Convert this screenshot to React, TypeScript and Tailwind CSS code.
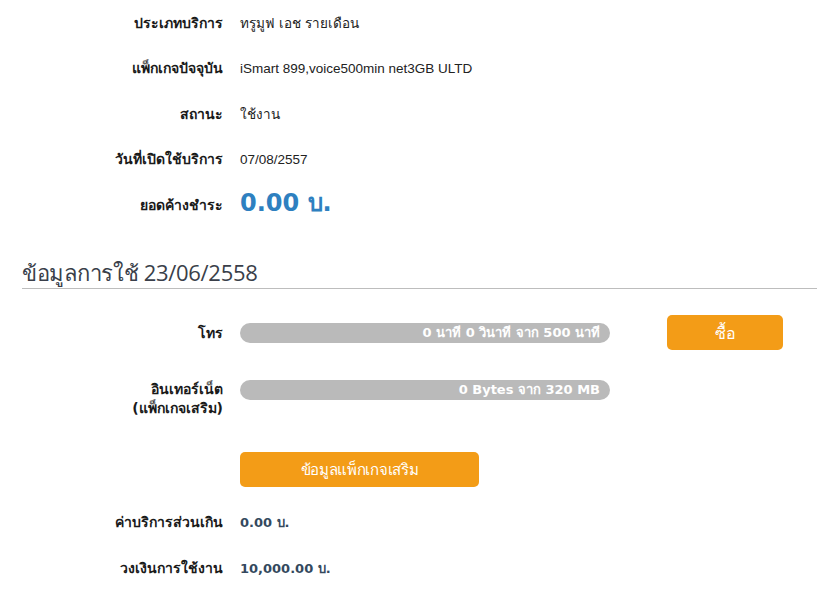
import React from "react";

const labelCls = "text-right font-bold text-[14px] text-[#1a1a1a] leading-[18px]";
const font = { fontFamily: "Tahoma, 'DejaVu Sans', 'Noto Sans', sans-serif" };
const valFont = { fontFamily: "'Liberation Sans', Arial, sans-serif" };
const headFont = { fontFamily: "'Open Sans', 'Noto Sans', sans-serif" };

function Row({ label, children, h = "h-[45.5px]" }: { label: React.ReactNode; children: React.ReactNode; h?: string }) {
  return (
    <div className={`grid grid-cols-[223px_1fr] gap-x-[17px] items-center ${h}`}>
      <div className={labelCls}>{label}</div>
      <div>{children}</div>
    </div>
  );
}

function Bar({ text }: { text: string }) {
  return (
    <div className="w-[370px] h-[20px] rounded-full bg-[#bababa] flex items-center justify-end pr-[10px] text-white font-bold text-[13px]">
      {text}
    </div>
  );
}

export default function App() {
  return (
    <div className="w-[817px] h-[600px] bg-white overflow-hidden" style={font}>
      <div>
        <Row label="ประเภทบริการ"><span className="text-[13.5px] text-[#222]" style={valFont}>ทรูมูฟ เอช รายเดือน</span></Row>
        <Row label="แพ็กเกจปัจจุบัน"><span className="text-[13.5px] text-[#222]" style={valFont}>iSmart 899,voice500min net3GB ULTD</span></Row>
        <Row label="สถานะ"><span className="text-[13.5px] text-[#222]" style={valFont}>ใช้งาน</span></Row>
        <Row label="วันที่เปิดใช้บริการ"><span className="text-[13.5px] text-[#222]" style={valFont}>07/08/2557</span></Row>
        <Row label="ยอดค้างชำระ"><span className="text-[24px] font-bold text-[#2e80c0] leading-none">0.00 บ.</span></Row>
      </div>
      <div className="mt-[30px] ml-[22px] border-b border-[#bdbdbd] pb-[2px]">
        <h2 className="text-[22px] tracking-[-0.3px] text-[#3a3f4a] leading-[28px]" style={headFont}>ข้อมูลการใช้ 23/06/2558</h2>
      </div>
      <div className="mt-[26px] grid grid-cols-[223px_370px_1fr] gap-x-[17px] items-center h-[36px]">
        <div className={labelCls}>โทร</div>
        <Bar text="0 นาที 0 วินาที จาก 500 นาที" />
        <div className="pl-[40px]">
          <button className="w-[116px] h-[35px] rounded-[5px] bg-[#f39c17] text-white text-[16px]" style={headFont}>ซื้อ</button>
        </div>
      </div>
      <div className="mt-[28px] grid grid-cols-[223px_1fr] gap-x-[17px] items-start">
        <div className={labelCls + " leading-[19px] pt-[1px]"}>อินเทอร์เน็ต<br />(แพ็กเกจเสริม)</div>
        <div className="pt-[1px]"><Bar text="0 Bytes จาก 320 MB" /></div>
      </div>
      <div className="mt-[34px] pl-[240px]">
        <button className="w-[239px] h-[35px] rounded-[5px] bg-[#f39c17] text-white text-[15px] tracking-[-0.3px]" style={headFont}>ข้อมูลแพ็กเกจเสริม</button>
      </div>
      <div className="mt-[12px]">
        <Row label="ค่าบริการส่วนเกิน" h="h-[46px]"><span className="text-[13px] font-bold text-[#34495e]">0.00 บ.</span></Row>
        <Row label="วงเงินการใช้งาน" h="h-[47px]"><span className="text-[13px] font-bold text-[#34495e]">10,000.00 บ.</span></Row>
      </div>
    </div>
  );
}
